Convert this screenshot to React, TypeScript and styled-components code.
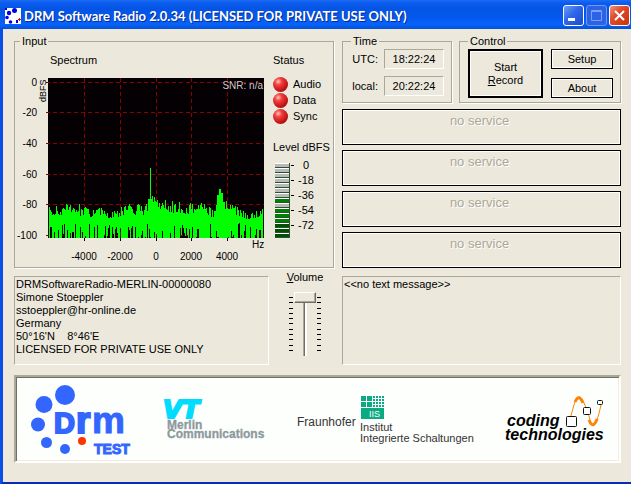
import React from 'react';
import styled, { createGlobalStyle } from 'styled-components';

const colors = {
  face: '#ece9dc',
  shadow: '#aca899',
  darkShadow: '#716f64',
  light: '#ffffff',
  green: '#00ff00',
  grid: '#8b0000',
  drm: '#3366ff',
};

const GlobalStyle = createGlobalStyle`
  * {
    box-sizing: border-box;
  }

  body {
    margin: 0;
    background: ${colors.face};
    color: #000;
    font-family: 'Liberation Sans', Arial, sans-serif;
    font-size: 11px;
    line-height: 13px;
  }
`;

const Window = styled.div`
  border-left: 3px solid #0a50e8;
  border-bottom: 3px solid #0a2ab8;
  background: ${colors.face};
`;

const TitleBar = styled.header`
  display: flex;
  align-items: center;
  gap: 3px;
  height: 29px;
  margin-left: -3px;
  padding: 2px 1px 0 5px;
  background: linear-gradient(#1c6cf4 0, #0c5cf0 3px, #0455e4 8px, #0458ee 18px, #0663fc 24px, #0450d8 100%);
`;

const Title = styled.h1`
  flex: 1;
  margin: 0;
  color: #fff;
  font-family: Lato, sans-serif;
  font-size: 13px;
  font-weight: 700;
  line-height: 20px;
  white-space: nowrap;
  text-shadow: 1px 1px 0 #0a2a8c;
`;

const CaptionButtons = styled.div`
  display: flex;
  gap: 2px;
`;

const CaptionButton = styled.button<{ $tone: 'blue' | 'red'; $dim?: boolean }>`
  display: flex;
  width: 21px;
  height: 21px;
  padding: 0;
  border: 1px solid ${({ $dim }) => ($dim ? '#6f9af4' : '#fff')};
  border-radius: 3px;
  background: ${({ $tone, $dim }) =>
    $tone === 'red'
      ? 'linear-gradient(135deg, #f09478, #e0492a 40%, #c83410)'
      : $dim
        ? '#2c62e6'
        : 'linear-gradient(135deg, #6f9cf8, #2f66e8 45%, #1a4cc8)'};
`;

const Body = styled.main`
  display: flex;
  flex-direction: column;
  padding: 6px 10px 19px 11px;
`;

const Columns = styled.div`
  display: grid;
  grid-template-columns: 320px minmax(0, 1fr);
  gap: 8px;
`;

const Group = styled.fieldset`
  min-width: 0;
  margin: 0;
  padding: 2px 7px 4px 8px;
  border: 1px solid ${colors.shadow};
  box-shadow: 1px 1px 0 ${colors.light};
`;

const GroupLegend = styled.legend`
  padding: 0 2px;
  line-height: 12px;
`;

const InputGroup = styled(Group)`
  display: grid;
  grid-template-columns: 244px 1fr;
  column-gap: 9px;
  padding: 7px 4px 4px 5px;
`;

const Heading = styled.h2<{ $indent?: boolean }>`
  margin: 0;
  padding-left: ${({ $indent }) => ($indent ? '30px' : '0')};
  font-size: 11px;
  font-weight: 400;
  line-height: 13px;
  white-space: nowrap;
`;

const Chart = styled.svg`
  display: block;
  margin-top: 7px;
  overflow: visible;
  font-size: 10px;
`;

const StatusList = styled.ul`
  margin: 9px 0 17px;
  padding: 0;
  list-style: none;
`;

const StatusItem = styled.li`
  display: flex;
  align-items: center;
  gap: 5px;
  height: 16px;
`;

const Led = styled.span`
  width: 15px;
  height: 15px;
  border-radius: 50%;
  background: radial-gradient(circle at 35% 30%, #ffc0b8 0, #f04040 25%, #c81818 60%, #700404 100%);
`;

const Meter = styled.div`
  display: flex;
  margin: 9px 0 0 2px;
`;

const MeterBars = styled.div`
  width: 15px;
  border-right: 1px solid #2c5030;
`;

const MeterBar = styled.div<{ $color: string }>`
  height: 5px;
  border-top: 1px solid #fff;
  border-bottom: 1px solid #2c5030;
  background: ${({ $color }) => $color};
`;

const MeterScale = styled.ol`
  margin: -5px 0 0;
  padding: 0;
  list-style: none;
`;

const MeterMark = styled.li`
  display: flex;
  align-items: center;
  gap: 4px;
  height: 15px;

  &::before {
    content: '';
    width: 3px;
    height: 1px;
    margin-left: 1px;
    background: #000;
  }

  span {
    width: 16px;
    text-align: center;
  }
`;

const RightColumn = styled.div`
  display: flex;
  flex-direction: column;
  gap: 6px;
`;

const TopGroups = styled.div`
  display: grid;
  grid-template-columns: 110px minmax(0, 1fr);
  gap: 7px;
`;

const TimeGrid = styled.div`
  display: grid;
  grid-template-columns: auto 60px;
  gap: 7px 6px;
  align-items: center;
  justify-content: end;
  text-align: right;
`;

const TimeField = styled.output`
  border: 1px solid;
  border-color: ${colors.shadow} ${colors.light} ${colors.light} ${colors.shadow};
  line-height: 18px;
  text-align: center;
`;

const ControlGrid = styled.div`
  display: grid;
  grid-template-columns: 75fr 62fr;
  grid-template-rows: 20px 20px;
  gap: 9px 8px;
`;

const PushButton = styled.button<{ $primary?: boolean }>`
  grid-row: ${({ $primary }) => ($primary ? 'span 2' : 'auto')};
  padding: 0;
  border: ${({ $primary }) => ($primary ? '2px' : '1px')} solid #000;
  background: ${colors.face};
  box-shadow: inset 0 0 0 1px #fff;
  color: #000;
  font: inherit;
`;

const Services = styled.div`
  display: flex;
  flex-direction: column;
  gap: 5px;
`;

const ServiceButton = styled.button`
  display: flex;
  justify-content: center;
  height: 36px;
  padding: 4px 4px 0 0;
  border: 1px solid #000;
  background: ${colors.face};
  box-shadow: inset 0 0 0 1px #fff;
  color: ${colors.shadow};
  font: inherit;
  font-size: 13px;
  text-shadow: 1px 1px 0 #fff;
`;

const LowerLeft = styled.div`
  display: grid;
  grid-template-columns: 255px 1fr;
  column-gap: 10px;
`;

const LowerRow = styled(Columns)`
  margin-top: 8px;
`;

const Panel = styled.div`
  height: 89px;
  padding: 1px 1px;
  border: 1px solid;
  border-color: ${colors.shadow} ${colors.light} ${colors.light} ${colors.shadow};
  white-space: pre;
`;

const Volume = styled.div`
  display: flex;
  flex-direction: column;
  align-items: center;
  padding-right: 3px;
  margin-top: -5px;
`;

const Fader = styled.div`
  display: flex;
  align-items: flex-start;
  gap: 1px;
  margin-top: 8px;
`;

const Ticks = styled.div`
  display: flex;
  flex-direction: column;
  justify-content: space-between;
  width: 4px;
  height: 54px;
  margin-top: 5px;

  span {
    height: 1px;
    background: #000;
  }
`;

const Slider = styled.input`
  width: 22px;
  height: 64px;
  margin: 0;
  appearance: none;
  background: linear-gradient(90deg, ${colors.shadow} 1px, ${colors.darkShadow} 1px 2px, #fff 2px) center / 4px 100% no-repeat;
  writing-mode: vertical-lr;
  direction: rtl;

  &::-webkit-slider-thumb {
    appearance: none;
    width: 22px;
    height: 11px;
    border: 1px solid;
    border-color: #fff ${colors.darkShadow} ${colors.darkShadow} #fff;
    background: ${colors.face};
    box-shadow: inset -1px -1px 0 ${colors.shadow};
  }
`;

const Banner = styled.footer`
  display: flex;
  justify-content: space-between;
  height: 88px;
  margin-top: 10px;
  padding: 7px 13px 0 15px;
  border: 2px solid;
  border-color: ${colors.shadow} #fff #fff ${colors.shadow};
  background: #fdfffc;
  box-shadow: inset 1px 1px 0 ${colors.darkShadow}, inset -1px -1px 0 #f4ece0;
`;

const Logo = styled.svg`
  flex: none;
  overflow: visible;
  font-family: 'Liberation Sans', Arial, sans-serif;
`;

// plot geometry, relative to the chart's own origin
const PLOT = { left: 28, top: 4, width: 216, height: 160 };
const yTicks = [
  { label: '0', y: 8 },
  { label: '-20', y: 38 },
  { label: '-40', y: 69 },
  { label: '-60', y: 100 },
  { label: '-80', y: 130 },
  { label: '-100', y: 161 },
];
const xTicks = [
  { label: '-4000', x: 64 },
  { label: '-2000', x: 100 },
  { label: '0', x: 136 },
  { label: '2000', x: 171 },
  { label: '4000', x: 207 },
];

// [x, y] of the noise floor's upper edge, interpolated in between
const envelope = [
  [0, 137], [18, 134], [40, 137], [60, 138], [80, 134], [95, 134], [103, 126],
  [116, 130], [130, 134], [155, 132], [166, 138], [170, 129], [174, 126],
  [182, 132], [192, 138], [204, 141], [216, 134],
];
const peaks: Record<number, number> = {
  18: 130, 31: 130, 80: 132, 89: 131, 100: 125, 102: 94, 104: 122, 106: 123, 109: 126,
  117: 126, 124: 127, 131: 128, 169: 121, 170: 121, 171: 115, 172: 115, 173: 119, 174: 119,
  178: 127, 182: 131, 186: 134,
};

const floorAt = (x: number) => {
  const i = Math.max(1, envelope.findIndex(([ex]) => ex >= x));
  const [x0, y0] = envelope[i - 1];
  const [x1, y1] = envelope[i];
  return y0 + ((y1 - y0) * (x - x0)) / (x1 - x0);
};

const buildSpectrum = () => {
  let seed = 7;
  const next = () => {
    seed = (seed * 16807) % 2147483647;
    return seed / 2147483647;
  };
  let d = '';
  for (let x = 1; x < PLOT.width - 1; x += 1) {
    const top = peaks[x] ?? Math.round(floorAt(x) + next() * 11 - 4);
    const dip = next();
    const bottom = dip > 0.42 ? 164 : Math.round(164 - next() * 15);
    d += `M${PLOT.left + x + 0.5} ${top}V${bottom}`;
  }
  return d;
};

const SpectrumChart: React.FC = () => (
  <Chart width="244" height="188" viewBox="0 0 244 188" role="img" aria-label="Spectrum">
    <rect x={PLOT.left} y={PLOT.top} width={PLOT.width} height={PLOT.height} fill="#040004" />
    <g stroke={colors.grid} strokeDasharray="4 3" shapeRendering="crispEdges">
      {yTicks.map(({ y }) => (
        <path key={y} d={`M26 ${y + 0.5}H244`} />
      ))}
      {xTicks.map(({ x }) => (
        <path key={x} d={`M${x + 0.5} 4V164`} />
      ))}
    </g>
    <path d={buildSpectrum()} stroke={colors.green} shapeRendering="crispEdges" />
    {yTicks.map(({ label, y }) => (
      <text key={label} x="17" y={y + 4} textAnchor="end">{label}</text>
    ))}
    {xTicks.map(({ label, x }) => (
      <React.Fragment key={label}>
        <path d={`M${x + 0.5} 164V167`} stroke="#000" />
        <text x={x} y="186" textAnchor="middle">{label}</text>
      </React.Fragment>
    ))}
    <text x="243" y="15" textAnchor="end" fill="#c8c8c8">SNR: n/a</text>
    <text x="232" y="174">Hz</text>
    <text transform="translate(26 28) rotate(-90)" fontSize="9">dBFS</text>
  </Chart>
);

const AppIcon: React.FC = () => (
  <svg width="16" height="16" viewBox="0 0 16 16" aria-hidden="true">
    <rect width="16" height="16" fill="#fff" />
    <g fill="#0000e8">
      <circle cx="9.5" cy="2.5" r="2.5" />
      <circle cx="4" cy="5" r="2.2" />
      <circle cx="2" cy="9.5" r="1.8" />
      <circle cx="5.5" cy="14" r="1.8" />
      <rect x="11" y="12" width="2" height="3" />
      <rect x="0" y="0" width="2" height="2" />
    </g>
    <path d="M14.5 10v3M13 11.5h3" stroke="#f00" />
  </svg>
);

const DrmLogo: React.FC = () => (
  <Logo width="100" height="76" viewBox="0 0 100 76" fontWeight="700">
    <g fill={colors.drm}>
      <circle cx="34" cy="11" r="10" />
      <circle cx="13" cy="20.5" r="8.5" />
      <circle cx="7" cy="40.5" r="7" />
      <circle cx="15.5" cy="58.5" r="5.5" />
      <circle cx="34" cy="65" r="5" />
    </g>
    <circle cx="51" cy="57" r="4" fill="#ff3300" />
    <g fill={colors.drm} stroke={colors.drm}>
      <text x="23" y="49" fontSize="29" strokeWidth="2">D</text>
      <text x="45" y="49" fontSize="37" strokeWidth="2">r</text>
      <text x="61" y="49" fontSize="37">m</text>
      <text x="63" y="70" fontSize="14">TEST</text>
    </g>
  </Logo>
);

const MerlinLogo: React.FC = () => (
  <Logo width="101" height="76" viewBox="0 0 101 76" fontWeight="700">
    <g fontFamily="DejaVu Sans, sans-serif">
      <text x="0" y="34" fontSize="25" fontStyle="italic" fill="#00dcff" stroke="#00dcff" strokeWidth="2">VT</text>
    </g>
    <g fill="#8c9a9c" stroke="#8c9a9c" strokeWidth="0.3" fontSize="12">
      <text x="4" y="45">Merlin</text>
      <text x="4" y="54">Communications</text>
    </g>
  </Logo>
);

const FraunhoferLogo: React.FC = () => (
  <Logo width="176" height="76" viewBox="0 0 176 76" fill="#333">
    <g fill="#0aaa82">
      <path d="M64 12h5v5h-5zM70 12h5v5h-5zM64 18h5v5h-5zM70 18h5v5h-5zM64 24h23v11h-23z" />
      {[0, 1, 2, 3].map((row) =>
        [0, 1, 2, 3].map((col) => (
          <rect key={`${row}-${col}`} x={76 + col * 3} y={12 + row * 3} width="2" height="2" />
        )),
      )}
    </g>
    <text x="72" y="33" fontSize="9" fill="#fff">IIS</text>
    <text x="0" y="42" fontSize="12">Fraunhofer</text>
    <text x="63" y="47" fontSize="11">Institut</text>
    <text x="63" y="58" fontSize="11">Integrierte Schaltungen</text>
  </Logo>
);

const CodingLogo: React.FC = () => (
  <Logo width="101" height="76" viewBox="0 0 101 76" fontWeight="700" fontStyle="italic">
    <path d="M66 32C69 20 71 13 74 13S79 19 82 26S85 41 88 41S93 34 96 21" fill="none" stroke="#ff8200" />
    <path d="M70 18Q74 9 78 19M84 36Q88 46 92 35" fill="none" stroke="#ff8200" strokeWidth="3" />
    <g fill="#fdfffc" stroke="#111">
      <rect x="61.5" y="32.5" width="10" height="10" rx="1" />
      <rect x="78.5" y="23.5" width="7" height="7" rx="1" />
      <rect x="92.5" y="16.5" width="5" height="4" rx="1" />
    </g>
    <text x="2" y="42" fontSize="16">coding</text>
    <text x="0" y="56" fontSize="16">technologies</text>
  </Logo>
);

const meterColors = [
  '#b8bab8', '#b8bab8', '#b8bab8', '#b8bab8', '#b8bab8', '#b8bab8', '#b8bab8', '#008000',
  '#b8bab8', '#008000', '#008000', '#008000', '#005000', '#005000', '#005000',
];
const licenseLines = [
  'DRMSoftwareRadio-MERLIN-00000080',
  'Simone Stoeppler',
  'sstoeppler@hr-online.de',
  'Germany',
  '50°16\'N    8°46\'E',
  'LICENSED FOR PRIVATE USE ONLY',
];

const TickColumn: React.FC = () => (
  <Ticks>
    {Array.from({ length: 11 }, (_, i) => (
      <span key={i} />
    ))}
  </Ticks>
);

const App: React.FC = () => (
  <>
    <GlobalStyle />
    <Window>
      <TitleBar>
        <AppIcon />
        <Title>DRM Software Radio 2.0.34 (LICENSED FOR PRIVATE USE ONLY)</Title>
        <CaptionButtons>
          <CaptionButton $tone="blue" aria-label="Minimize">
            <svg width="19" height="19"><rect x="4" y="12" width="7" height="3" fill="#fff" /></svg>
          </CaptionButton>
          <CaptionButton $tone="blue" $dim aria-label="Maximize" disabled>
            <svg width="19" height="19" fill="none" stroke="#7c9ff2">
              <path d="M4.5 4.5h10v10h-10zM4 5.5h11" />
            </svg>
          </CaptionButton>
          <CaptionButton $tone="red" aria-label="Close">
            <svg width="19" height="19" stroke="#fff" strokeWidth="2"><path d="M5 5l9 9M14 5l-9 9" /></svg>
          </CaptionButton>
        </CaptionButtons>
      </TitleBar>

      <Body>
        <Columns>
          <InputGroup>
            <GroupLegend>Input</GroupLegend>
            <div>
              <Heading $indent>Spectrum</Heading>
              <SpectrumChart />
            </div>
            <div>
              <Heading>Status</Heading>
              <StatusList>
                {['Audio', 'Data', 'Sync'].map((name) => (
                  <StatusItem key={name}>
                    <Led />
                    {name}
                  </StatusItem>
                ))}
              </StatusList>
              <Heading>Level dBFS</Heading>
              <Meter>
                <MeterBars>
                  {meterColors.map((color, i) => (
                    <MeterBar key={i} $color={color} />
                  ))}
                </MeterBars>
                <MeterScale>
                  {['0', '-18', '-36', '-54', '-72'].map((mark) => (
                    <MeterMark key={mark}><span>{mark}</span></MeterMark>
                  ))}
                </MeterScale>
              </Meter>
            </div>
          </InputGroup>

          <RightColumn>
            <TopGroups>
              <Group>
                <GroupLegend>Time</GroupLegend>
                <TimeGrid>
                  <label htmlFor="utc">UTC:</label>
                  <TimeField id="utc">18:22:24</TimeField>
                  <label htmlFor="local">local:</label>
                  <TimeField id="local">20:22:24</TimeField>
                </TimeGrid>
              </Group>
              <Group>
                <GroupLegend>Control</GroupLegend>
                <ControlGrid>
                  <PushButton $primary>Start<br /><u>R</u>ecord</PushButton>
                  <PushButton>Setup</PushButton>
                  <PushButton>About</PushButton>
                </ControlGrid>
              </Group>
            </TopGroups>
            <Services>
              {[1, 2, 3, 4].map((id) => (
                <ServiceButton key={id} disabled>no service</ServiceButton>
              ))}
            </Services>
          </RightColumn>
        </Columns>

        <LowerRow>
          <LowerLeft>
            <Panel>{licenseLines.join('\n')}</Panel>
            <Volume>
              <label htmlFor="volume"><u>V</u>olume</label>
              <Fader>
                <TickColumn />
                <Slider id="volume" type="range" min="0" max="100" defaultValue="100" />
                <TickColumn />
              </Fader>
            </Volume>
          </LowerLeft>
          <Panel>{'<<no text message>>'}</Panel>
        </LowerRow>

        <Banner>
          <DrmLogo />
          <MerlinLogo />
          <FraunhoferLogo />
          <CodingLogo />
        </Banner>
      </Body>
    </Window>
  </>
);

export default App;
